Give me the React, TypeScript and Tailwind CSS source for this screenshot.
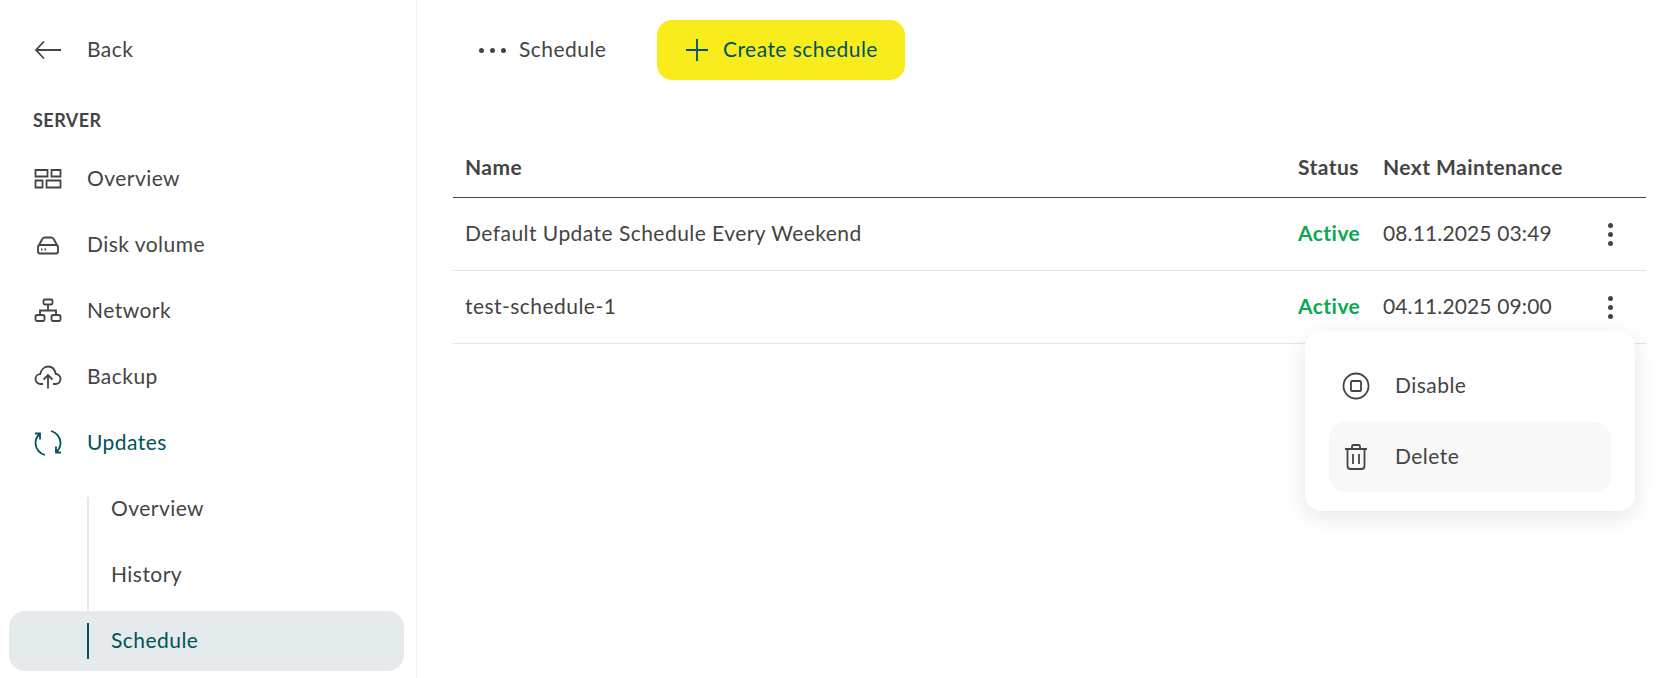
import React from "react";

const SideIcon = ({ children }: { children: React.ReactNode }) => (
  <svg
    width="28"
    height="28"
    viewBox="0 0 28 28"
    fill="none"
    stroke="currentColor"
    strokeWidth="1.8"
    className="shrink-0"
  >
    {children}
  </svg>
);

const BackIcon = () => (
  <SideIcon>
    <path d="M2 14h25M10 5.500L2 14l8 8.500" />
  </SideIcon>
);
const GridIcon = () => (
  <SideIcon>
    <path d="M1.500 5h12v6.500h-12zM17.500 5h9v6.500h-9zM1.500 15.500h7v7h-7zM12.500 15.500h14v7h-14z" />
  </SideIcon>
);
const DiskIcon = () => (
  <SideIcon>
    <path d="M4.500 15L8 8.500Q8.800 6.500 10.500 6.500h7q1.700 0 2.500 2L23.500 15M6 14h16q2 0 2 2v4.500q0 2-2 2H6q-2 0-2-2V16q0-2 2-2z" />
    <path d="M7 18.500h1.500M10.500 18.500h1.500" />
  </SideIcon>
);
const NetworkIcon = () => (
  <SideIcon>
    <path d="M11 2.500h6q1.500 0 1.500 1.500v2q0 1.500-1.500 1.500h-6q-1.500 0-1.500-1.500V4q0-1.500 1.500-1.500zM14 7.500v6M6 18v-4.500h16V18M3.500 18h5q2 0 2 1.500v3q0 1.500-2 1.500h-5q-2 0-2-1.500v-3q0-1.500 2-1.500zM19.500 18h5q2 0 2 1.500v3q0 1.500-2 1.500h-5q-2 0-2-1.500v-3q0-1.500 2-1.500z" />
  </SideIcon>
);
const CloudIcon = () => (
  <SideIcon>
    <path d="M9 21H6.500C3.500 21 1.500 18.500 1.500 16c0-2.500 2-4.700 4.700-4.800C7 7 10 3.500 14 3.500c4 0 7 3 7.800 7.500 2.800.2 4.700 2.500 4.700 5 0 2.700-2 5-5 5H19" />
    <path d="M14 25.500V12M9.500 16.500L14 12l4.500 4.500" />
  </SideIcon>
);
const RefreshIcon = () => (
  <SideIcon>
    <path d="M17 2C22.500 3.400 26.500 8.300 26.500 14c0 3.500-1.500 6.500-4 9M11 26C5.500 24.600 1.500 19.700 1.500 14c0-3.500 1.500-6.500 4-9" />
    <path d="M6 10.500V4.500H1M22 17.500v6h5" />
  </SideIcon>
);

const NavRow = ({
  icon,
  label,
  active,
}: {
  icon: React.ReactNode;
  label: string;
  active?: boolean;
}) => (
  <div
    className={`flex h-[66px] items-center gap-[25px] pl-[34px] ${
      active ? "text-[#00535c]" : "text-[#444444]"
    }`}
  >
    {icon}
    <span className="mb-[3px]">{label}</span>
  </div>
);

const SubRow = ({ label }: { label: string }) => (
  <div className="flex h-[66px] items-center pb-[3px] pl-[111px] text-[#444444]">{label}</div>
);

const Sidebar = () => (
  <aside className="h-full w-[417px] shrink-0 border-r border-[#eeeeee] pr-3">
    <div className="pt-[17px]">
      <NavRow icon={<BackIcon />} label="Back" />
    </div>
    <div className="pl-[33px] pt-[26px] pb-[15px] text-[18px] font-bold leading-[22px] text-[#444444]">
      SERVER
    </div>
    <NavRow icon={<GridIcon />} label="Overview" />
    <NavRow icon={<DiskIcon />} label="Disk volume" />
    <NavRow icon={<NetworkIcon />} label="Network" />
    <NavRow icon={<CloudIcon />} label="Backup" />
    <NavRow icon={<RefreshIcon />} label="Updates" active />
    <div className="relative">
      <div className="absolute left-[87px] top-[21px] h-[114px] w-[2px] bg-[#e6e6e6]" />
      <SubRow label="Overview" />
      <SubRow label="History" />
      <div className="relative ml-[9px] mt-[3px] h-[60px] w-[395px] rounded-2xl bg-[#e5ebec]">
        <div className="absolute left-[78px] top-[12px] h-[36px] w-[2px] bg-[#00535c]" />
        <div className="flex h-full items-center pb-[3px] pl-[102px] text-[#00535c]">Schedule</div>
      </div>
    </div>
  </aside>
);

const Kebab = () => (
  <div className="flex w-[22px] flex-col items-center gap-[4px]">
    <span className="size-[5px] rounded-full bg-[#444444]" />
    <span className="size-[5px] rounded-full bg-[#444444]" />
    <span className="size-[5px] rounded-full bg-[#444444]" />
  </div>
);

const TableRow = ({ name, date }: { name: string; date: string }) => (
  <div className="flex h-[73px] items-center border-b border-[#e6e6e6]">
    <div className="mb-[3px] w-[845px] pl-3">{name}</div>
    <div className="mb-[3px] w-[85px] font-bold text-[#0aa84f]">Active</div>
    <div className="mb-[3px] w-[216px] tracking-[0.13px]">{date}</div>
    <Kebab />
  </div>
);

const RowMenu = () => (
  <div className="absolute left-[888px] top-[331px] h-[180px] w-[330px] rounded-2xl bg-white px-6 pt-5 shadow-[0_6px_24px_rgba(0,0,0,0.1)]">
    <div className="flex h-[70px] items-center gap-[24px] px-3">
      <svg width="30" height="30" viewBox="0 0 30 30" fill="none" stroke="#444444" strokeWidth="1.800">
        <circle cx="15" cy="15" r="12.500" />
        <rect x="10" y="10" width="10" height="10" rx="1" />
      </svg>
      <span className="mb-[3px]">Disable</span>
    </div>
    <div className="mt-[1px] flex h-[70px] items-center gap-[24px] rounded-2xl bg-[#f8f8f8] px-3">
      <svg width="30" height="30" viewBox="0 0 30 30" fill="none" stroke="#444444" strokeWidth="1.800">
        <path d="M4 7h22M11 7V4.500Q11 3 12.500 3h5Q19 3 19 4.500V7M6.500 7v17q0 3 3 3h11q3 0 3-3V7M12 12v10M18 12v10" />
      </svg>
      <span className="mb-[3px]">Delete</span>
    </div>
  </div>
);

const Main = () => (
  <main className="relative h-full flex-1 pl-9 pr-4">
    <div className="flex h-[100px] items-start pt-5">
      <div className="flex h-[60px] w-[204px] items-center gap-[13px] pl-[26px]">
        <div className="flex gap-[6px]">
          <span className="size-[5px] rounded-full bg-[#444444]" />
          <span className="size-[5px] rounded-full bg-[#444444]" />
          <span className="size-[5px] rounded-full bg-[#444444]" />
        </div>
        <span className="mb-[3px] text-[#444444]">Schedule</span>
      </div>
      <button className="flex h-[60px] w-[248px] items-center gap-[14px] rounded-[15px] bg-[#f8ec1c] pl-[28px] text-[#00535c]">
        <svg width="24" height="24" viewBox="0 0 24 24" fill="none" stroke="#00535c" strokeWidth="1.800">
          <path d="M12 1v22M1 12h22" />
        </svg>
        <span className="mb-[3px]">Create schedule</span>
      </button>
    </div>
    <div className="mt-[38px] w-[1193px] text-[#444444]">
      <div className="flex h-[60px] items-center border-b border-[#444444] font-bold">
        <div className="mb-[2px] w-[845px] pl-3">Name</div>
        <div className="mb-[2px] w-[85px]">Status</div>
        <div className="mb-[2px]">Next Maintenance</div>
      </div>
      <TableRow name="Default Update Schedule Every Weekend" date="08.11.2025 03:49" />
      <TableRow name="test-schedule-1" date="04.11.2025 09:00" />
    </div>
    <RowMenu />
  </main>
);

export default function App() {
  return (
    <div className="flex h-[678px] overflow-hidden bg-white font-['Lato',sans-serif] text-[21px] leading-[26px] tracking-[0.46px] text-[#444444]">
      <Sidebar />
      <Main />
    </div>
  );
}
